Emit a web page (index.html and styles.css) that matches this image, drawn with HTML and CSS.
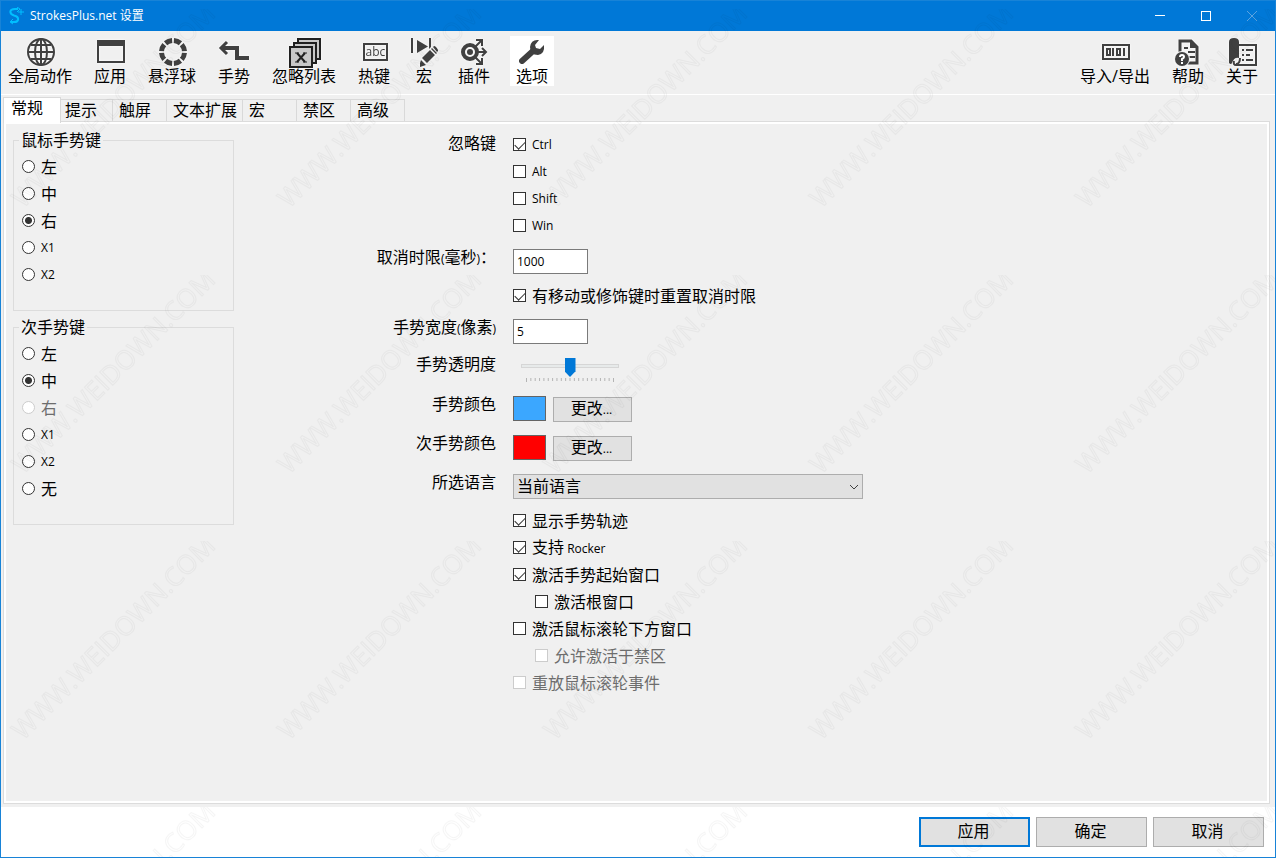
FILE: index.html
```html
<!DOCTYPE html>
<html lang="zh-CN">
  <head>
    <meta charset="utf-8" />
    <meta name="viewport" content="width=device-width, initial-scale=1.0" />
    <title>StrokesPlus.net 设置</title>
    <link rel="stylesheet" href="styles.css">
  </head>
  <body>
    <div class="window">
      <header class="titlebar">
        <svg class="logo" width="16" height="18" viewBox="0 0 16 18" fill="none" stroke="#00bfff" stroke-width="2">
          <path d="M9 2H6C0 2 0 7 5 8.500C11 10 10 15 5 15H2" />
          <path d="M8 0l3 2-3 3M4 12l-3 3 3 2" stroke-width="1" />
          <path d="M12 2v6M9 5h6" stroke-width="1" />
        </svg>
        <h1>StrokesPlus.net 设置</h1>
        <div class="window-buttons">
          <button type="button" aria-label="最小化">
            <svg width="10" height="10" stroke="#fff"><path d="M0 4.500h10" /></svg>
          </button>
          <button type="button" aria-label="最大化">
            <svg width="10" height="10" fill="none" stroke="#fff"><rect x=".5" y=".5" width="9" height="9" /></svg>
          </button>
          <button type="button" aria-label="关闭">
            <svg width="10" height="10" stroke="#5ba3e0"><path d="M0 0l10 10M10 0L0 10" /></svg>
          </button>
        </div>
      </header>

      <nav class="toolbar">
        <button type="button" class="tool">
          <svg width="32" height="32" viewBox="0 0 32 32" fill="none" stroke="#404040" stroke-width="2">
            <circle cx="17" cy="16" r="13" />
            <ellipse cx="17" cy="16" rx="6" ry="13" />
            <path d="M17 3v26M4 16h26M7 9h20M7 23h20" />
          </svg>
          <span>全局动作</span>
        </button>
        <button type="button" class="tool">
          <svg width="32" height="32" viewBox="0 0 32 32">
            <path d="M3 4h28v23H3zM5 10v15h24V10z" fill="#404040" fill-rule="evenodd" />
          </svg>
          <span>应用</span>
        </button>
        <button type="button" class="tool">
          <svg width="32" height="32" viewBox="0 0 32 32" fill="none" stroke="#404040">
            <circle cx="17" cy="16" r="11.500" stroke-width="5" pathLength="80" stroke-dasharray="8 2" stroke-dashoffset="-1" />
          </svg>
          <span>悬浮球</span>
        </button>
        <button type="button" class="tool">
          <svg width="32" height="32" viewBox="0 0 32 32" fill="none" stroke="#404040">
            <path d="M4 12h15v10h12" stroke-width="4" />
            <path d="M9 6l-6 6 6 6" stroke-width="3" />
          </svg>
          <span>手势</span>
        </button>
        <button type="button" class="tool">
          <svg width="32" height="32" viewBox="0 0 32 32" fill="#c8c8c8" stroke="#202020" stroke-width="2">
            <rect x="10" y="3" width="22" height="20" />
            <rect x="6" y="7" width="22" height="20" />
            <rect x="2" y="11" width="22" height="20" />
            <path d="M9 17l8 9M17 17l-8 9" />
            <path d="M7 17h4M15 17h4M7 26h4M15 26h4" stroke-width="1" />
          </svg>
          <span>忽略列表</span>
        </button>
        <button type="button" class="tool">
          <svg width="32" height="32" viewBox="0 0 32 32">
            <rect x="6" y="8" width="23" height="16" fill="none" stroke="#404040" stroke-width="2" />
            <text class="abc" x="17.500" y="20" text-anchor="middle">abc</text>
          </svg>
          <span>热键</span>
        </button>
        <button type="button" class="tool tool-narrow">
          <svg width="28" height="32" viewBox="0 0 28 32" fill="#404040">
            <path d="M1 2h2v15H1zM7 4l11 6.500L7 17zM19 2h2v9l-2 2z" />
            <path d="M12 22l8-8 5 5-8 8zM21 13l1-1 5 5-1 1zM23 11l1-1q2 0 4 4v1l-1 1zM11 24l5 5-6 2v-4z" />
          </svg>
          <span>宏</span>
        </button>
        <button type="button" class="tool">
          <svg width="32" height="32" viewBox="0 0 32 32" fill="none" stroke="#404040">
            <circle cx="12" cy="16" r="7" stroke-width="4" />
            <circle cx="12" cy="16" r="3" fill="#404040" stroke="none" />
            <path d="M17 11l7-7M17 21l7 7M19 16h9" stroke-width="2" />
            <path d="M18 4h6v6M18 28h6v-6M24 12l4 4-4 4" stroke-width="2" />
          </svg>
          <span>插件</span>
        </button>
        <button type="button" class="tool active">
          <svg width="32" height="32" viewBox="0 0 32 32">
            <path d="M6 25L17 15" stroke="#404040" stroke-width="6" stroke-linecap="round" />
            <path d="M23 4Q15 3 14 11Q14 19 22 19Q29 18 28 9L24 13L20 12L19 9Z" fill="#404040" />
          </svg>
          <span>选项</span>
        </button>

        <button type="button" class="tool tool-right">
          <svg width="32" height="32" viewBox="0 0 32 32" fill="none" stroke="#404040" stroke-width="2">
            <rect x="4" y="9" width="26" height="14" />
            <path d="M8 13h3v6H8zM14 12v8M18 13h3v6h-3zM25 12v8" />
          </svg>
          <span>导入/导出</span>
        </button>
        <button type="button" class="tool">
          <svg width="32" height="32" viewBox="0 0 32 32">
            <path d="M8 17V5h11l6 6v16H15" fill="none" stroke="#404040" stroke-width="3" />
            <path d="M18 4v8h8zM12 11h4v2h-4zM16 15h7v2h-7zM17 20h6v2h-6z" fill="#404040" />
            <circle cx="10" cy="23" r="8" fill="#f0f0f0" />
            <circle cx="10" cy="23" r="7" fill="#404040" />
            <path d="M8 21q0-2 2-2t2 2q0 1-2 2v2M10 26v2" fill="none" stroke="#fff" stroke-width="2" />
          </svg>
          <span>帮助</span>
        </button>
        <button type="button" class="tool">
          <svg width="32" height="32" viewBox="0 0 32 32">
            <path d="M3 27V6q0-4 5-4t5 4v16q-5-1-7 5q-1 2-3 0z" fill="#404040" />
            <path d="M13 9h17v20H10q-3 0-2-4M10 28q4 0 4-6" fill="none" stroke="#404040" stroke-width="2" />
            <path d="M16 13h2v2h-2zM20 13h7v2h-7zM16 18h2v2h-2zM20 18h4v2h-4zM16 23h2v2h-2zM20 23h7v2h-7z" fill="#404040" />
          </svg>
          <span>关于</span>
        </button>
      </nav>

      <main class="content">
        <div class="tabs" role="tablist">
          <button type="button" role="tab" class="tab selected" aria-selected="true">常规</button>
          <button type="button" role="tab" class="tab">提示</button>
          <button type="button" role="tab" class="tab">触屏</button>
          <button type="button" role="tab" class="tab">文本扩展</button>
          <button type="button" role="tab" class="tab">宏</button>
          <button type="button" role="tab" class="tab">禁区</button>
          <button type="button" role="tab" class="tab">高级</button>
        </div>

        <div class="panel">
          <div class="gesture-keys">
            <fieldset class="group">
              <legend>鼠标手势键</legend>
              <label class="option"><input type="radio" name="primary">左</label>
              <label class="option"><input type="radio" name="primary">中</label>
              <label class="option"><input type="radio" name="primary" checked>右</label>
              <label class="option"><input type="radio" name="primary"><span class="latin">X1</span></label>
              <label class="option"><input type="radio" name="primary"><span class="latin">X2</span></label>
            </fieldset>
            <fieldset class="group">
              <legend>次手势键</legend>
              <label class="option"><input type="radio" name="secondary">左</label>
              <label class="option"><input type="radio" name="secondary" checked>中</label>
              <label class="option disabled"><input type="radio" name="secondary" disabled>右</label>
              <label class="option"><input type="radio" name="secondary"><span class="latin">X1</span></label>
              <label class="option"><input type="radio" name="secondary"><span class="latin">X2</span></label>
              <label class="option"><input type="radio" name="secondary">无</label>
            </fieldset>
          </div>

          <form class="settings">
            <div class="row row-keys">
              <span class="row-label">忽略键</span>
              <div class="checks">
                <label class="option"><input type="checkbox" checked><span class="latin">Ctrl</span></label>
                <label class="option"><input type="checkbox"><span class="latin">Alt</span></label>
                <label class="option"><input type="checkbox"><span class="latin">Shift</span></label>
                <label class="option"><input type="checkbox"><span class="latin">Win</span></label>
              </div>
            </div>
            <div class="row row-text">
              <label class="row-label" for="timeout">取消时限<span class="latin">(</span>毫秒<span class="latin">)</span>：</label>
              <input type="text" id="timeout" class="text-box" value="1000">
            </div>
            <div class="row row-checks">
              <span class="row-label"></span>
              <label class="option"><input type="checkbox" checked>有移动或修饰键时重置取消时限</label>
            </div>
            <div class="row row-text">
              <label class="row-label" for="pen-width">手势宽度<span class="latin">(</span>像素<span class="latin">)</span></label>
              <input type="text" id="pen-width" class="text-box" value="5">
            </div>
            <div class="row row-slider">
              <label class="row-label" for="opacity">手势透明度</label>
              <div class="slider">
                <input type="range" id="opacity" min="0" max="20" value="10">
                <svg class="ticks" viewBox="0 0 98 4" height="4" stroke="#b4b4b4">
                  <path d="M5 1.500H93" stroke-width="3" stroke-dasharray="1 3.350" />
                  <path d="M5.500 0v4M92.500 0v4" />
                </svg>
              </div>
            </div>
            <div class="row">
              <span class="row-label">手势颜色</span>
              <div class="color-field">
                <span class="swatch swatch-primary"></span>
                <button type="button" class="button">更改<span class="latin">...</span></button>
              </div>
            </div>
            <div class="row">
              <span class="row-label">次手势颜色</span>
              <div class="color-field">
                <span class="swatch swatch-secondary"></span>
                <button type="button" class="button">更改<span class="latin">...</span></button>
              </div>
            </div>
            <div class="row">
              <label class="row-label" for="language">所选语言</label>
              <div class="select-box">
                <select id="language">
                  <option>当前语言</option>
                </select>
                <svg class="chevron" width="10" height="6" fill="none" stroke="#404040"><path d="M1 1l4 4 4-4" /></svg>
              </div>
            </div>
            <div class="row row-checks">
              <span class="row-label"></span>
              <div class="checks">
                <label class="option"><input type="checkbox" checked>显示手势轨迹</label>
                <label class="option"><input type="checkbox" checked><span>支持<span class="latin"> Rocker</span></span></label>
                <label class="option"><input type="checkbox" checked>激活手势起始窗口</label>
                <label class="option indent"><input type="checkbox">激活根窗口</label>
                <label class="option"><input type="checkbox">激活鼠标滚轮下方窗口</label>
                <label class="option indent disabled"><input type="checkbox" disabled>允许激活于禁区</label>
                <label class="option disabled"><input type="checkbox" disabled>重放鼠标滚轮事件</label>
              </div>
            </div>
          </form>
        </div>
      </main>

      <footer class="footer">
        <button type="button" class="button default">应用</button>
        <button type="button" class="button">确定</button>
        <button type="button" class="button">取消</button>
      </footer>

      <svg class="watermark" aria-hidden="true">
        <defs>
          <pattern id="mark" width="266" height="266" y="8" patternUnits="userSpaceOnUse">
            <text transform="translate(22 200) rotate(-45)">WWW.WEIDOWN.COM</text>
          </pattern>
        </defs>
        <rect width="100%" height="100%" fill="url(#mark)" />
      </svg>
    </div>
  </body>
</html>
```
FILE: styles.css
```css
* {
  box-sizing: border-box;
}

body {
  margin: 0;
  font-family: "Open Sans", "Noto Sans CJK SC", sans-serif;
  font-size: 16px;
  line-height: 18px;
  color: #000;
}

button,
input,
select {
  font: inherit;
  color: inherit;
  margin: 0;
}

.latin {
  font-size: 12px;
}

.window {
  position: relative;
  display: flex;
  flex-direction: column;
  min-height: 100vh;
  background: #f0f0f0;
  border: 1px solid #1883d7;
}

/* 标题栏 */
.titlebar {
  display: flex;
  align-items: center;
  height: 30px;
  padding-left: 8px;
  background: #0078d7;
  color: #fff;
}

.titlebar h1 {
  margin: 0 0 0 5px;
  font-size: 12px;
  font-weight: normal;
}

.window-buttons {
  display: flex;
  margin-left: auto;
}

.window-buttons button {
  display: flex;
  align-items: center;
  justify-content: center;
  width: 46px;
  height: 28px;
  padding: 0;
  border: 0;
  background: none;
}

/* 工具栏 */
.toolbar {
  display: flex;
  gap: 10px;
  height: 64px;
  padding: 5px 11px 0 1px;
  border-bottom: 1px solid #fff;
}

.tool {
  display: flex;
  flex-direction: column;
  align-items: center;
  height: 50px;
  padding: 0 6px;
  border: 0;
  background: none;
  line-height: 16px;
  white-space: nowrap;
}

.tool svg {
  flex-shrink: 0;
  overflow: visible;
  filter: drop-shadow(0 0 1px #fff);
}

.tool-narrow {
  padding: 0 4px;
}

.tool.active {
  margin-left: 4px;
  background: #fff;
}

.tool-right {
  margin-left: auto;
}

.abc {
  font-size: 12px;
  fill: #404040;
}

/* 选项卡 */
.content {
  display: flex;
  flex-direction: column;
  flex: 1;
  padding: 2px 5px 3px 2px;
}

.tabs {
  display: flex;
  align-items: flex-end;
  height: 24px;
}

.tab {
  height: 22px;
  min-width: 54px;
  padding: 0 5px 2px 6px;
  border: 1px solid #d9d9d9;
  border-width: 1px 1px 0 0;
  background: #f0f0f0;
  text-align: left;
}

.tab.selected {
  height: 26px;
  min-width: 58px;
  margin-right: -2px;
  margin-bottom: -2px;
  padding: 0 7px 5px;
  border-left-width: 1px;
  background: #fff;
  z-index: 1;
}

.panel {
  display: flex;
  flex: 1;
  align-items: flex-start;
  border: 1px solid #dcdcdc;
  box-shadow: inset 0 0 0 2px #fff;
  padding: 9px;
}

/* 手势键 */
.gesture-keys {
  display: flex;
  flex-direction: column;
  flex-shrink: 0;
  gap: 7px;
  width: 221px;
}

.group {
  margin: 0;
  padding: 4px 8px 22px;
  border: 1px solid #dcdcdc;
}

.group legend {
  padding: 0 2px;
  margin-left: -3px;
}

.option {
  display: flex;
  align-items: center;
  gap: 6px;
  height: 27px;
}

.indent {
  margin-left: 22px;
}

.disabled {
  color: #6d6d6d;
}

input[type="radio"],
input[type="checkbox"] {
  appearance: none;
  flex-shrink: 0;
  width: 13px;
  height: 13px;
  border: 1px solid #333;
  background: #fff;
}

input[type="radio"] {
  border-radius: 50%;
}

input[type="radio"]:checked {
  background: radial-gradient(circle, #333 3px, #fff 4px);
}

input[type="checkbox"]:checked::before {
  content: "";
  display: block;
  width: 9px;
  height: 5px;
  margin: 2px 1px;
  border: 1px solid #333;
  border-width: 0 0 1px 1px;
  transform: rotate(-45deg);
}

input:disabled {
  border-color: #ccc !important;
}

/* 设置表单 */
.settings {
  flex: 1;
  min-width: 0;
}

.row {
  display: flex;
  align-items: flex-start;
  gap: 17px;
  margin-top: 14px;
}

.row-keys {
  margin-top: 0;
}

.row-text {
  margin-top: 10px;
}

.row-checks {
  margin-top: 8px;
}

.row-slider {
  margin-top: 12px;
}

.row-label {
  flex-shrink: 0;
  width: 262px;
  line-height: 16px;
  text-align: right;
}

.row-keys .row-label {
  line-height: 24px;
}

.text-box {
  width: 75px;
  height: 25px;
  padding: 0 3px;
  border: 1px solid #7a7a7a;
  background: #fff;
  font-size: 12px;
}

.slider {
  width: 98px;
  height: 26px;
  margin-left: 8px;
}

.slider input {
  appearance: none;
  display: block;
  width: 100%;
  height: 20px;
  background: none;
}

.slider input::-webkit-slider-runnable-track {
  height: 4px;
  border: 1px solid #d6d6d6;
  background: #e7eaea;
}

.slider input::-webkit-slider-thumb {
  appearance: none;
  width: 11px;
  height: 19px;
  margin-top: -7px;
  background: #0078d7;
  clip-path: polygon(0 0, 100% 0, 100% 70%, 50% 100%, 0 70%);
}

.ticks {
  display: block;
  width: 100%;
  margin-top: 2px;
}

.color-field {
  display: flex;
  align-items: flex-start;
  gap: 7px;
}

.swatch {
  width: 33px;
  height: 25px;
  border: 1px solid #646464;
}

.swatch-primary {
  background: #3ba7ff;
}

.swatch-secondary {
  background: #f00;
}

.button {
  height: 25px;
  padding: 0 2px 2px 0;
  border: 1px solid #adadad;
  background: #e1e1e1;
}

.color-field .button {
  width: 79px;
  margin-top: 1px;
  margin-bottom: -1px;
}

.select-box {
  position: relative;
  width: 350px;
  height: 25px;
}

.select-box select {
  appearance: none;
  width: 100%;
  height: 100%;
  padding: 0 3px 2px;
  border: 1px solid #adadad;
  border-radius: 0;
  background: #e1e1e1;
}

.chevron {
  position: absolute;
  top: 10px;
  right: 4px;
  pointer-events: none;
}

/* 底部按钮 */
.footer {
  display: flex;
  justify-content: flex-end;
  gap: 6px;
  padding: 10px 11px;
  background: #fff;
}

.footer .button {
  width: 111px;
  height: 30px;
}

.footer .default {
  border: 2px solid #0078d7;
}

/* 水印 */
.watermark {
  position: absolute;
  top: 0;
  left: 0;
  width: 100%;
  height: 100%;
  pointer-events: none;
  z-index: 2;
}

.watermark text {
  font-size: 26px;
  fill: none;
  stroke: #000;
  stroke-width: 1px;
  stroke-opacity: 0.04;
}
```
